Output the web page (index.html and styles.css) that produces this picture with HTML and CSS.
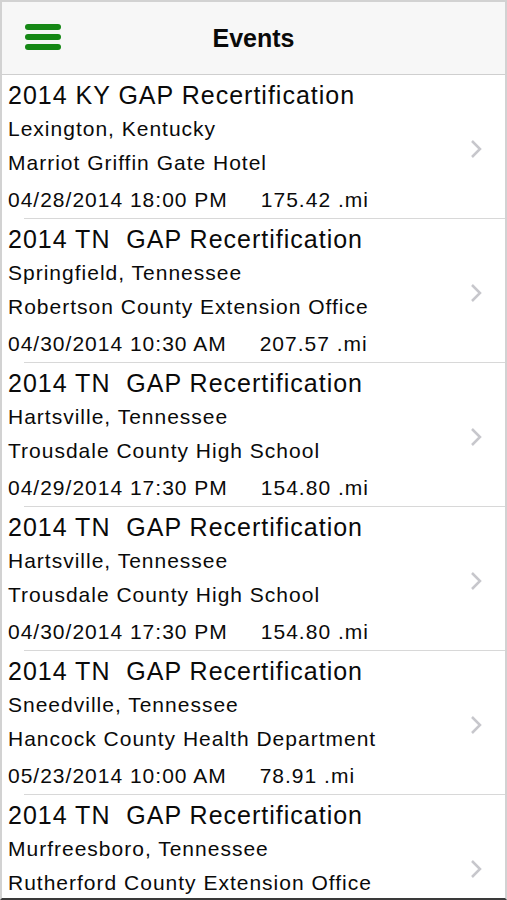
FILE: index.html
```html
<!DOCTYPE html>
<html lang="en">
<head>
    <meta charset="UTF-8">
    <meta name="viewport" content="width=device-width, initial-scale=1.0">
    <title>Events</title>
    <link rel="stylesheet" href="styles.css">
</head>
<body>
    <div class="screen">
        <header class="navbar">
            <button class="menu-btn" aria-label="Menu">
                <span></span><span></span><span></span>
            </button>
            <h1>Events</h1>
        </header>

        <ul class="event-list">
            <li class="event">
                <div class="info">
                    <div class="title">2014 KY GAP Recertification</div>
                    <div class="line">Lexington, Kentucky</div>
                    <div class="line">Marriot Griffin Gate Hotel</div>
                    <div class="line date">04/28/2014 18:00 PM<span class="dist">175.42 .mi</span></div>
                </div>
                <svg class="chevron" width="14" height="20" viewBox="0 0 14 20"><polyline points="3,2 11,10 3,18" /></svg>
            </li>
            <li class="event">
                <div class="info">
                    <div class="title">2014 TN&nbsp; GAP Recertification</div>
                    <div class="line">Springfield, Tennessee</div>
                    <div class="line">Robertson County Extension Office</div>
                    <div class="line date">04/30/2014 10:30 AM<span class="dist">207.57 .mi</span></div>
                </div>
                <svg class="chevron" width="14" height="20" viewBox="0 0 14 20"><polyline points="3,2 11,10 3,18" /></svg>
            </li>
            <li class="event">
                <div class="info">
                    <div class="title">2014 TN&nbsp; GAP Recertification</div>
                    <div class="line">Hartsville, Tennessee</div>
                    <div class="line">Trousdale County High School</div>
                    <div class="line date">04/29/2014 17:30 PM<span class="dist">154.80 .mi</span></div>
                </div>
                <svg class="chevron" width="14" height="20" viewBox="0 0 14 20"><polyline points="3,2 11,10 3,18" /></svg>
            </li>
            <li class="event">
                <div class="info">
                    <div class="title">2014 TN&nbsp; GAP Recertification</div>
                    <div class="line">Hartsville, Tennessee</div>
                    <div class="line">Trousdale County High School</div>
                    <div class="line date">04/30/2014 17:30 PM<span class="dist">154.80 .mi</span></div>
                </div>
                <svg class="chevron" width="14" height="20" viewBox="0 0 14 20"><polyline points="3,2 11,10 3,18" /></svg>
            </li>
            <li class="event">
                <div class="info">
                    <div class="title">2014 TN&nbsp; GAP Recertification</div>
                    <div class="line">Sneedville, Tennessee</div>
                    <div class="line">Hancock County Health Department</div>
                    <div class="line date">05/23/2014 10:00 AM<span class="dist">78.91 .mi</span></div>
                </div>
                <svg class="chevron" width="14" height="20" viewBox="0 0 14 20"><polyline points="3,2 11,10 3,18" /></svg>
            </li>
            <li class="event">
                <div class="info">
                    <div class="title">2014 TN&nbsp; GAP Recertification</div>
                    <div class="line">Murfreesboro, Tennessee</div>
                    <div class="line">Rutherford County Extension Office</div>
                </div>
                <svg class="chevron" width="14" height="20" viewBox="0 0 14 20"><polyline points="3,2 11,10 3,18" /></svg>
            </li>
        </ul>
    </div>
</body>
</html>
```

FILE: styles.css
```css
body {
    margin: 0;
    padding: 0;
    font-family: "Liberation Sans", Arial, sans-serif;
    background-color: #fff;
    color: #0a0a0a;
}
.screen {
    height: 900px;
    box-sizing: border-box;
    border: 2px solid #d2d2d2;
    border-bottom-color: #3a3a3a;
    overflow: hidden;
    background-color: #fff;
}
.navbar {
    height: 72px;
    display: flex;
    align-items: center;
    justify-content: center;
    position: relative;
    background-color: #f7f7f7;
    border-bottom: 1px solid #cfcfcf;
}
.navbar h1 {
    margin: 0;
    font-size: 25px;
    font-weight: bold;
    color: #0a0a0a;
}
.menu-btn {
    position: absolute;
    left: 23px;
    top: 22px;
    width: 36px;
    padding: 0;
    border: none;
    background: none;
    display: flex;
    flex-direction: column;
    gap: 4px;
}
.menu-btn span {
    display: block;
    height: 6px;
    border-radius: 3px;
    background-color: #168816;
}
.event-list {
    list-style: none;
    margin: 0;
    padding: 0;
}
.event {
    display: flex;
    align-items: center;
    height: 144px;
    box-sizing: border-box;
    padding: 3px 22px 0 6px;
    position: relative;
}
.event::after {
    content: "";
    position: absolute;
    left: 22px;
    right: 0;
    bottom: 0;
    height: 1px;
    background-color: #d8d8d8;
}
.info {
    flex: 1;
    align-self: flex-start;
    letter-spacing: 1px;
}
.title {
    font-size: 25px;
    line-height: 34px;
}
.line {
    font-size: 21px;
    line-height: 34px;
}
.date {
    margin-top: 3px;
}
.dist {
    margin-left: 33px;
}
.chevron {
    fill: none;
    stroke: #c7c7cc;
    stroke-width: 2.5;
}
```
